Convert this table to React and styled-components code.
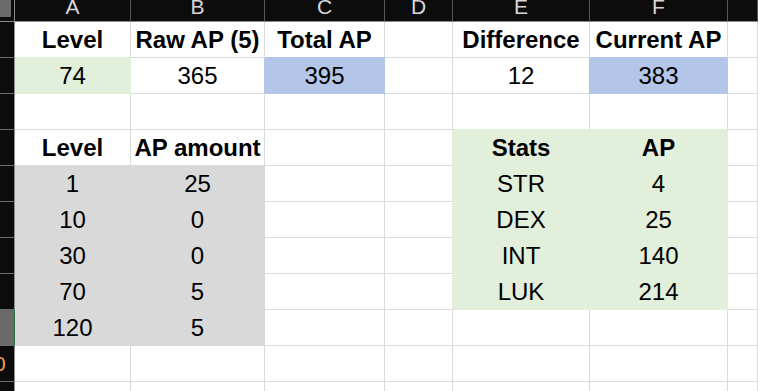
import React from 'react'
import styled, { createGlobalStyle } from 'styled-components'

const GRID = '#dadada'
const FILLS = {
  green: '#e2efda',
  blue: '#b4c6e7',
  gray: '#d9d9d9',
}

const GlobalStyle = createGlobalStyle`
  html, body {
    margin: 0;
    padding: 0;
    background: #ffffff;
    overflow: hidden;
  }
`

const Sheet = styled.div`
  display: grid;
  grid-template-columns: 15px 116px 134px 120px 68px 137px 138px 1fr;
  grid-auto-rows: 36px;
  grid-template-rows: 22px;
  width: 758px;
  height: 391px;
  overflow: hidden;
  font-family: 'Liberation Sans', Arial, sans-serif;
`

const Corner = styled.div`
  background: #0c0c0c;
  border-right: 1px solid #8c8c8c;
  border-bottom: 1px solid #8c8c8c;
  box-sizing: border-box;
  &::before {
    content: '';
    display: block;
    width: 11px;
    height: 17px;
    background: #6b6b6b;
  }
`

const ColHead = styled.div`
  box-sizing: border-box;
  background: #0c0c0c;
  border-right: 1px solid #575757;
  border-bottom: 1px solid #8c8c8c;
  color: #d8d8d8;
  font-size: 21px;
  line-height: 13px;
  text-align: center;
  overflow: hidden;
`

const RowHead = styled.div`
  box-sizing: border-box;
  background: ${({ selected }) => (selected ? '#6a6a6a' : '#0c0c0c')};
  border-bottom: 1px solid #6e6e6e;
  border-right: 1px solid ${({ selected }) => (selected ? '#217346' : '#8c8c8c')};
  overflow: hidden;
  white-space: nowrap;
`

// the row header is scrolled off to the left, so only the tail of two-digit numbers shows
const RowNum = styled.span`
  display: block;
  width: 40px;
  margin-left: -26px;
  text-align: center;
  color: #e9a34a;
  font-size: 21px;
  line-height: 35px;
`

const Cell = styled.div`
  box-sizing: border-box;
  background: ${({ fill }) => (fill ? FILLS[fill] : '#ffffff')};
  border-right: 1px solid ${({ right }) => right};
  border-bottom: 1px solid ${({ bottom }) => bottom};
  color: #000000;
  font-size: 24px;
  font-weight: ${({ bold }) => (bold ? 700 : 400)};
  line-height: 35px;
  text-align: center;
  white-space: nowrap;
`

// sheet contents, rows 1..11, columns A..G
const rows = [
  [['Level', 'b'], ['Raw AP (5)', 'b'], ['Total AP', 'b'], null, ['Difference', 'b'], ['Current AP', 'b'], null],
  [['74', 'green'], ['365'], ['395', 'blue'], null, ['12'], ['383', 'blue'], null],
  [null, null, null, null, null, null, null],
  [['Level', 'b'], ['AP amount', 'b'], null, null, ['Stats', 'b green'], ['AP', 'b green'], null],
  [['1', 'gray'], ['25', 'gray'], null, null, ['STR', 'green'], ['4', 'green'], null],
  [['10', 'gray'], ['0', 'gray'], null, null, ['DEX', 'green'], ['25', 'green'], null],
  [['30', 'gray'], ['0', 'gray'], null, null, ['INT', 'green'], ['140', 'green'], null],
  [['70', 'gray'], ['5', 'gray'], null, null, ['LUK', 'green'], ['214', 'green'], null],
  [['120', 'gray'], ['5', 'gray'], null, null, null, null, null],
  [null, null, null, null, null, null, null],
  [null, null, null, null, null, null, null],
]

const fillOf = (r, c) => {
  const cell = rows[r] && rows[r][c]
  if (!cell || !cell[1]) return null
  return cell[1].split(' ').find((k) => FILLS[k]) || null
}

const letters = ['A', 'B', 'C', 'D', 'E', 'F', '']

const App = () => (
  <>
    <GlobalStyle />
    <Sheet>
      <Corner />
      {letters.map((l, i) => (
        <ColHead key={`h-${i}`}>{l}</ColHead>
      ))}
      {rows.map((row, r) => (
        <React.Fragment key={`r-${r}`}>
          <RowHead selected={r === 8}>
            {r === 9 && <RowNum>{r + 1}</RowNum>}
          </RowHead>
          {row.map((cell, c) => {
            const fill = fillOf(r, c)
            const right = fill || fillOf(r, c + 1)
            const bottom = fill || fillOf(r + 1, c)
            return (
              <Cell
                key={`c-${r}-${c}`}
                fill={fill}
                bold={cell && cell[1] && cell[1].split(' ').includes('b')}
                right={right ? FILLS[right] : GRID}
                bottom={bottom ? FILLS[bottom] : GRID}
              >
                {cell ? cell[0] : ''}
              </Cell>
            )
          })}
        </React.Fragment>
      ))}
    </Sheet>
  </>
)

export default App
